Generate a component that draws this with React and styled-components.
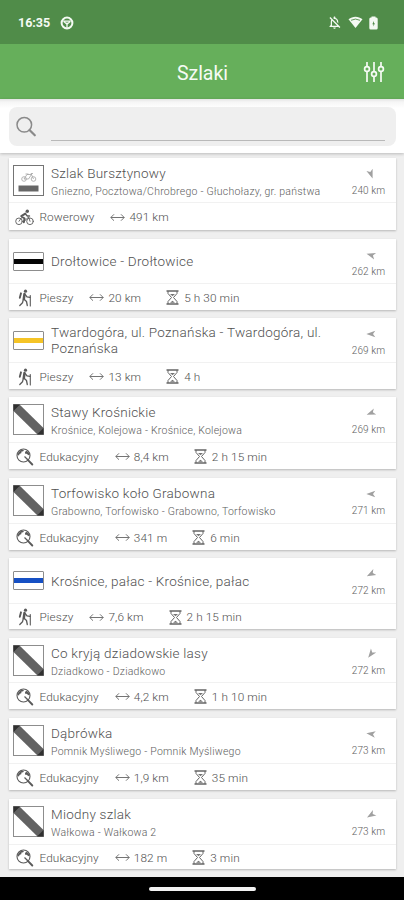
import React from 'react';
import styled, { createGlobalStyle } from 'styled-components';
import { MdOutlineNotificationsOff } from 'react-icons/md';

const GlobalStyle = createGlobalStyle`
    body {
        margin: 0;
        background-color: #efefef;
        font-family: Roboto, "Liberation Sans", sans-serif;
    }
    * {
        box-sizing: border-box;
    }
    svg {
        flex-shrink: 0;
    }
`;

const Screen = styled.div`
    width: 404px;
    height: 900px;
    display: flex;
    flex-direction: column;
    overflow: hidden;
    background-color: #efefef;
`;

const StatusBar = styled.div`
    height: 44px;
    flex-shrink: 0;
    display: flex;
    align-items: center;
    padding: 1px 26px 0 18px;
    color: #f4faf3;
    background-color: #508c49;
`;

const Clock = styled.span`
    font-size: 12.5px;
    font-weight: 700;
    width: 42px;
`;

const StatusIcons = styled.div`
    margin-left: auto;
    display: flex;
    align-items: center;
    gap: 6px;
`;

const AppBar = styled.header`
    height: 55px;
    flex-shrink: 0;
    display: grid;
    grid-template-columns: 1fr auto 1fr;
    align-items: center;
    padding: 3px 19px 0;
    color: #f6fbf5;
    background-color: #66af5b;
`;

const Heading = styled.h1`
    grid-column: 2;
    margin: 0 0 0 1px;
    font-size: 19.5px;
    font-weight: 400;
`;

const FilterIcon = styled.svg`
    justify-self: end;
    display: block;
    margin-bottom: 2px;
`;

const SearchPanel = styled.div`
    height: 54px;
    flex-shrink: 0;
    padding: 8px 8px 0 9px;
    background: linear-gradient(#e4e4e4, #f6f6f6 3px, #fff 9px);
    box-shadow: 0 1px 3px rgba(0, 0, 0, .22);
    z-index: 1;
`;

const SearchBox = styled.div`
    height: 39px;
    display: flex;
    align-items: center;
    padding: 0 11px 0 6px;
    border-radius: 8px;
    background-color: #efefef;
`;

const SearchLine = styled.div`
    flex-grow: 1;
    height: 28px;
    margin-left: 14px;
    border-bottom: 1px solid #b9b9b9;
`;

const TrailList = styled.div`
    flex-grow: 1;
    min-height: 0;
    overflow: hidden;
    padding: 5px 8px 0 9px;
`;

const Card = styled.article`
    height: ${p => p.$head + p.$foot}px;
    margin-bottom: ${p => p.$gap}px;
    background-color: #fff;
    box-shadow: 0 1px 2px rgba(0, 0, 0, .24);
`;

const CardHead = styled.div`
    height: ${p => p.$height}px;
    display: flex;
    align-items: center;
    padding-left: 4px;
    border-bottom: 1px solid #f1f1f1;
`;

const Names = styled.div`
    flex-grow: 1;
    margin-left: 7px;
    padding-top: ${p => p.$lowered ? '3px' : 0};
`;

const Title = styled.div`
    font-size: 13.5px;
    line-height: 16px;
    font-weight: 300;
    letter-spacing: 0.24px;
    color: #505050;
`;

const Subtitle = styled.div`
    margin-top: 4px;
    font-size: 10.5px;
    line-height: 14px;
    font-weight: 300;
    letter-spacing: 0.24px;
    color: #5c5c5c;
    white-space: nowrap;
`;

const Bearing = styled.div`
    width: 57px;
    height: 100%;
    flex-shrink: 0;
    display: flex;
    flex-direction: column;
    align-items: center;
    padding: 10px 0 0 2px;
    color: #606060;
    font-size: 10px;
    font-weight: 300;
    line-height: 12px;
    letter-spacing: 0.1px;
    white-space: nowrap;
`;

const ArrowIcon = styled.svg`
    display: block;
    margin: 0 0 5px 4px;
    transform: rotate(${p => p.$angle}deg);
`;

const CardFoot = styled.div`
    height: ${p => p.$height}px;
    display: flex;
    align-items: center;
    padding: 1px 0 0 6px;
    font-size: 11.8px;
    font-weight: 300;
    letter-spacing: 0.1px;
    color: #505050;
    white-space: nowrap;
`;

const KindIcon = styled.span`
    width: 19px;
    display: flex;
    justify-content: center;
    margin-right: 5.5px;
    color: #5a5a5a;
`;

const Stat = styled.span`
    display: flex;
    align-items: center;
    gap: ${p => p.$gap}px;
    margin-left: ${p => p.$offset}px;
`;

const NavigationBar = styled.div`
    height: 23px;
    flex-shrink: 0;
    display: flex;
    align-items: center;
    justify-content: center;
    background-color: #000;
    z-index: 1;
`;

const NavigationHandle = styled.div`
    width: 107px;
    height: 4px;
    margin-left: 1px;
    border-radius: 2px;
    background-color: #f2f2f2;
`;

const WheelIcon = () => (
    <svg width="14" height="14" viewBox="0 0 14 14" fill="none" stroke="currentColor">
        <circle cx="7" cy="7" r="5.4" strokeWidth="2"/>
        <path d="M3.500 5.200h7M7 6.500v5.500M3.500 5.200 7 8.200l3.500-3" strokeWidth="1.300"/>
    </svg>
);

const WifiIcon = () => (
    <svg width="15" height="13" viewBox="0 0 15 13" fill="currentColor">
        <path d="M.5 3.300C4.700-.1 10.300-.1 14.500 3.300L7.500 12Z"/>
        <path d="M3 4.300q4.500-2.500 9 0" fill="none" stroke="#508c49" strokeWidth=".9"/>
    </svg>
);

const BatteryIcon = () => (
    <svg width="9" height="14" viewBox="0 0 9 14">
        <path d="M2.500 1.500V.5h4v1H7.300Q8.700 1.500 8.700 3v9Q8.700 13.500 7.300 13.500H1.700Q.3 13.500.3 12V3Q.3 1.500 1.700 1.500Z" fill="currentColor"/>
        <path d="M5 5 3.300 8.300H4.400V10.500L5.900 7.200H5Z" fill="#508c49"/>
    </svg>
);

const SearchIcon = () => (
    <svg width="22" height="22" viewBox="0 0 22 22" fill="none" stroke="#8a8a8a" strokeLinecap="round">
        <circle cx="9.300" cy="8.800" r="7.300" strokeWidth="1.500"/>
        <path d="m14.500 14 5.300 5.300" strokeWidth="2.200"/>
    </svg>
);

const Sliders = () => (
    <FilterIcon width="22" height="22" viewBox="0 0 22 22" fill="none" stroke="currentColor" strokeWidth="1.700">
        <path d="M4 1v4.500M4 10.500V21M11 1v9.500M11 15.500V21M18 1v4.500M18 10.500V21"/>
        <circle cx="4" cy="8" r="2.400"/>
        <circle cx="11" cy="13" r="2.400"/>
        <circle cx="18" cy="8" r="2.400"/>
    </FilterIcon>
);

const CyclistIcon = () => (
    <svg width="19" height="17" viewBox="0 0 19 17" fill="none" stroke="currentColor" strokeLinecap="round" strokeLinejoin="round">
        <circle cx="4" cy="12.300" r="3.300" strokeWidth=".9"/>
        <circle cx="15" cy="12.300" r="3.300" strokeWidth=".9"/>
        <circle cx="12.300" cy="2.200" r="1.700" fill="currentColor" stroke="none"/>
        <path d="M10.300 4.600 6.300 7.200l3.300 2.300-.8 3.800" strokeWidth="2"/>
        <path d="m10.500 5 1.800 2h2.200" strokeWidth="1.400"/>
        <path d="m4 12.300 2.500-3.600M9.300 12.300l4.200-4.300 1.500 4.300" strokeWidth=".9"/>
    </svg>
);

const HikerIcon = () => (
    <svg width="14" height="18" viewBox="0 0 14 18" fill="none" stroke="currentColor" strokeLinecap="round" strokeLinejoin="round">
        <circle cx="7.500" cy="2.200" r="1.600" fill="currentColor" stroke="none"/>
        <path d="M6.500 5 5.800 10" strokeWidth="2.500"/>
        <path d="m3 4.300-1.200 4.500" strokeWidth="1.900"/>
        <path d="m7.300 5.700 1.700 2.200 3 .5M5.800 10l2.700 2.500.8 4M5.300 10.500l-.8 3.300-2.700 2.700" strokeWidth="1.300"/>
        <path d="M12.300 6.500v10.500" strokeWidth="1.100"/>
    </svg>
);

const GlobeIcon = () => (
    <svg width="18" height="18" viewBox="0 0 18 18" fill="none" stroke="currentColor">
        <circle cx="7.500" cy="7.500" r="6.500" strokeWidth="1.100"/>
        <path d="M2.500 4.300 5 1.800l3 .2-.8 1.300-2 .5.3 1.200-2 1-.5 1.500L1.500 7Z" fill="currentColor" stroke="none"/>
        <path d="m10 2.700 2.300 1 1.300 2.800-1.300.8-1.500-1.500-1.300.3-.6-1.500Z" fill="currentColor" stroke="none"/>
        <path d="m8.500 8.500 3.500 3.500" strokeWidth="1.200"/>
        <path d="m11.800 11.800 4.500 4.700" strokeWidth="1.900" strokeLinecap="round"/>
    </svg>
);

const LengthIcon = () => (
    <svg width="15" height="9" viewBox="0 0 15 9" fill="none" stroke="#747474">
        <path d="M.8 4.500h13.400M4 1.300.8 4.500 4 7.700M11 1.300l3.200 3.200L11 7.700"/>
    </svg>
);

const HourglassIcon = () => (
    <svg width="13" height="15" viewBox="0 0 13 15" fill="none" stroke="#656565">
        <path d="M.5 1h12M.5 14h12" strokeWidth="1.300"/>
        <path d="M2 1v2.500L5.500 7.500 2 11.500V14M11 1v2.500L7.500 7.500l3.500 4V14"/>
        <path d="M4 4h5L6.500 6.300ZM4 12.700l2.500-2 2.500 2Z" fill="#757575" stroke="none"/>
    </svg>
);

const Arrow = ({angle}) => (
    <ArrowIcon $angle={angle} width="12" height="12" viewBox="-6 -6 12 12">
        <path d="M0-4.700 3.300 4.300 0 2-3.300 4.300Z" fill="#a0a0a0"/>
    </ArrowIcon>
);

const BikeSign = () => (
    <svg width="31" height="31" viewBox="0 0 31 31" fill="none">
        <rect x=".5" y=".5" width="30" height="30" fill="#fff" stroke="#747474"/>
        <g stroke="#a2a2a2" strokeWidth=".8">
            <circle cx="11" cy="14" r="2.300"/>
            <circle cx="20.500" cy="14" r="2.300"/>
            <path d="m11 14 3-4.500h4.500L15.500 14ZM20.500 14 18 8.500h2M12.500 9h3"/>
        </g>
        <path d="M5.500 20.500h20v6h-20Z" fill="#666"/>
    </svg>
);

const DiagonalSign = () => (
    <svg width="31" height="31" viewBox="0 0 31 31">
        <rect x=".5" y=".5" width="30" height="30" fill="#fff" stroke="#8d8d8d"/>
        <path d="M.5.500h6l24 23.500v6.500h-6L.5 7Z" fill="#626262"/>
        <path d="M.5.500h6.500L.5 7ZM30.500 30.500h-6.500l6.500-6.500Z" fill="#303030"/>
    </svg>
);

const StripeSign = ({color}) => (
    <svg width="31" height="19" viewBox="0 0 31 19">
        <rect x=".5" y=".5" width="30" height="18" rx=".5" fill="#fff" stroke="#8d8d8d"/>
        <path d="M1 7h29v5H1Z" fill={color}/>
    </svg>
);

const kinds = {
    Rowerowy: <CyclistIcon/>,
    Pieszy: <HikerIcon/>,
    Edukacyjny: <GlobeIcon/>,
};

const trails = [
    {title: 'Szlak Bursztynowy', route: 'Gniezno, Pocztowa/Chrobrego - Głuchołazy, gr. państwa', sign: <BikeSign/>, kind: 'Rowerowy', length: '491 km', away: '240 km', angle: 160, head: 45, foot: 27, gap: 9},
    {title: 'Drołtowice - Drołtowice', sign: <StripeSign color="#050505"/>, kind: 'Pieszy', length: '20 km', time: '5 h 30 min', away: '262 km', angle: 287, head: 45, foot: 26, gap: 8},
    {title: 'Twardogóra, ul. Poznańska - Twardogóra, ul. Poznańska', sign: <StripeSign color="#f5c426"/>, kind: 'Pieszy', length: '13 km', time: '4 h', away: '269 km', angle: 270, head: 45, foot: 26, gap: 8},
    {title: 'Stawy Krośnickie', route: 'Krośnice, Kolejowa - Krośnice, Kolejowa', sign: <DiagonalSign/>, kind: 'Edukacyjny', length: '8,4 km', time: '2 h 15 min', away: '269 km', angle: 249, head: 46, foot: 26, gap: 9},
    {title: 'Torfowisko koło Grabowna', route: 'Grabowno, Torfowisko - Grabowno, Torfowisko', sign: <DiagonalSign/>, kind: 'Edukacyjny', length: '341 m', time: '6 min', away: '271 km', angle: 271, head: 46, foot: 26, gap: 8},
    {title: 'Krośnice, pałac - Krośnice, pałac', sign: <StripeSign color="#1650c4"/>, kind: 'Pieszy', length: '7,6 km', time: '2 h 15 min', away: '272 km', angle: 243, head: 46, foot: 25, gap: 9},
    {title: 'Co kryją dziadowskie lasy', route: 'Dziadkowo - Dziadkowo', sign: <DiagonalSign/>, kind: 'Edukacyjny', length: '4,2 km', time: '1 h 10 min', away: '272 km', angle: 217, head: 45, foot: 26, gap: 9},
    {title: 'Dąbrówka', route: 'Pomnik Myśliwego - Pomnik Myśliwego', sign: <DiagonalSign/>, kind: 'Edukacyjny', length: '1,9 km', time: '35 min', away: '273 km', angle: 278, head: 46, foot: 26, gap: 9},
    {title: 'Miodny szlak', route: 'Wałkowa - Wałkowa 2', sign: <DiagonalSign/>, kind: 'Edukacyjny', length: '182 m', time: '3 min', away: '273 km', angle: 238, head: 46, foot: 24, gap: 0},
];

const TrailCard = ({trail}) => (
    <Card $head={trail.head} $foot={trail.foot} $gap={trail.gap}>
        <CardHead $height={trail.head}>
            {trail.sign}
            <Names $lowered={!!trail.route}>
                <Title>{trail.title}</Title>
                {trail.route && <Subtitle>{trail.route}</Subtitle>}
            </Names>
            <Bearing>
                <Arrow angle={trail.angle}/>
                {trail.away}
            </Bearing>
        </CardHead>
        <CardFoot $height={trail.foot}>
            <KindIcon>{kinds[trail.kind]}</KindIcon>
            {trail.kind}
            <Stat $offset={16} $gap={4}>
                <LengthIcon/>
                {trail.length}
            </Stat>
            {trail.time && (
                <Stat $offset={25} $gap={5}>
                    <HourglassIcon/>
                    {trail.time}
                </Stat>
            )}
        </CardFoot>
    </Card>
);

const App = () => (
    <Screen>
        <GlobalStyle/>
        <StatusBar>
            <Clock>16:35</Clock>
            <WheelIcon/>
            <StatusIcons>
                <MdOutlineNotificationsOff size={15}/>
                <WifiIcon/>
                <BatteryIcon/>
            </StatusIcons>
        </StatusBar>
        <AppBar>
            <Heading>Szlaki</Heading>
            <Sliders/>
        </AppBar>
        <SearchPanel>
            <SearchBox>
                <SearchIcon/>
                <SearchLine/>
            </SearchBox>
        </SearchPanel>
        <TrailList>
            {trails.map(trail => <TrailCard key={trail.title} trail={trail}/>)}
        </TrailList>
        <NavigationBar>
            <NavigationHandle/>
        </NavigationBar>
    </Screen>
);

export default App;
